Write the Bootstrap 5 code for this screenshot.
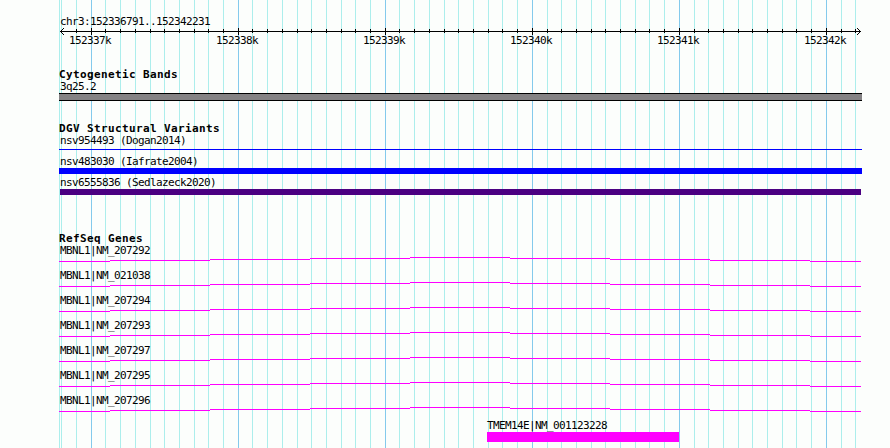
<!DOCTYPE html>
<html lang="en">
<head>
  <meta charset="UTF-8">
  <meta name="viewport" content="width=device-width, initial-scale=1">
  <title>chr3:152336791..152342231</title>
  <link href="https://cdn.jsdelivr.net/npm/bootstrap@5.3.0/dist/css/bootstrap.min.css" rel="stylesheet">
  <style>
    body { background: #fcfefc; color: #000; font-family: "DejaVu Sans Mono", monospace; }
    .browser-view { width: 890px; height: 448px; padding: 16px 0 0 59px; }
    .grid-lines { z-index: 0; }
    .tracks { z-index: 1; width: 803px; }
    svg { display: block; shape-rendering: crispEdges; overflow: visible; }
    .feature-label, .tick-label { font-size: 11px; line-height: 12px; height: 12px; letter-spacing: -0.622px; white-space: nowrap; }
    .feature-label { padding-left: 1px; }
    .track-title { font-size: 11px; font-weight: 700; line-height: 12px; height: 12px; margin: 0; letter-spacing: 0.378px; white-space: nowrap; }
    .tick-labels { height: 12px; margin: 0 0 22px 10px; }
    .tick-label { flex: 0 0 147px; }
    .band { height: 8px; margin-bottom: 22px; background: #848284; border: solid #000; border-width: 1px 0; }
    .variant-thin { height: 1px; margin: 2px 0 6px; background: #0000ff; }
    .variant-loss { height: 6px; margin-bottom: 3px; background: #0000ff; }
    .variant-complex { height: 6px; margin: 0 1px 38px 1px; background: #4b0082; }
    .gene { height: 25px; }
    .gene-short { margin-left: 428px; width: 192px; }
    .exon { height: 10px; background: #ff00ff; }
  </style>
</head>
<body>
  <main class="browser-view position-relative overflow-hidden">
    <svg class="grid-lines position-absolute top-0 start-0" id="gridLines" width="890" height="448" aria-hidden="true"></svg>

    <div class="tracks position-relative d-flex flex-column">
      <!-- Ruler -->
      <div class="feature-label">chr3:152336791..152342231</div>
      <svg id="ruler" width="803" height="7" viewBox="59 28 803 7" aria-hidden="true"></svg>
      <div class="tick-labels d-flex" id="tickLabels"></div>

      <!-- Cytobands -->
      <h2 class="track-title">Cytogenetic Bands</h2>
      <div class="feature-label">3q25.2</div>
      <div class="band"></div>

      <!-- Structural variants -->
      <h2 class="track-title">DGV Structural Variants</h2>
      <div class="feature-label">nsv954493 (Dogan2014)</div>
      <div class="variant-thin"></div>
      <div class="feature-label">nsv483030 (Iafrate2004)</div>
      <div class="variant-loss"></div>
      <div class="feature-label">nsv6555836 (Sedlazeck2020)</div>
      <div class="variant-complex"></div>

      <!-- Genes -->
      <h2 class="track-title">RefSeq Genes</h2>
      <div id="genes"></div>
      <div class="gene-short">
        <div class="feature-label ps-0">TMEM14E|NM_001123228</div>
        <div class="exon"></div>
      </div>
    </div>
  </main>

  <script>
    const firstTick = 91.2;
    const tickStep = 14.704;
    let grid = '<rect x="59" y="0" width="1" height="448" fill="#aceeec"/>';
    let ruler = '<rect x="60" y="31" width="801" height="1"/>';

    for (let i = -2; i <= 52; i++) {
      const x = Math.floor(firstTick + i * tickStep);
      const major = i % 10 === 0;
      grid += `<rect x="${x}" y="0" width="1" height="448" fill="${major ? "#84caec" : "#aceeec"}"/>`;
      if (i > -2) {
        ruler += `<rect x="${x}" y="${major ? 28 : 29}" width="1" height="${major ? 7 : 4}"/>`;
      }
    }
    // Arrow heads, one pixel per step
    for (let d = 1; d <= 3; d++) {
      ruler += `<rect x="${60 + d}" y="${31 - d}" width="1" height="1"/><rect x="${60 + d}" y="${31 + d}" width="1" height="1"/>`;
      ruler += `<rect x="${860 - d}" y="${31 - d}" width="1" height="1"/><rect x="${860 - d}" y="${31 + d}" width="1" height="1"/>`;
    }
    document.getElementById("gridLines").innerHTML = grid;
    document.getElementById("ruler").innerHTML = ruler;

    document.getElementById("tickLabels").innerHTML = [152337, 152338, 152339, 152340, 152341, 152342]
      .map(k => `<span class="tick-label">${k}k</span>`).join("");

    // Intron line climbs to the middle of the view and drops again
    const steps = [[0, 51, 4], [51, 100, 3], [151, 100, 2], [251, 100, 1], [351, 100, 0],
      [451, 100, 1], [551, 100, 2], [651, 100, 3], [751, 51, 4]];
    const intron = steps.map(([x, w, y]) => `<rect x="${x}" y="${y}" width="${w}" height="1" fill="#ff00ff"/>`).join("");
    document.getElementById("genes").innerHTML = ["207292", "021038", "207294", "207293", "207297", "207295", "207296"]
      .map(id => `
        <div class="gene">
          <div class="feature-label">MBNL1|NM_${id}</div>
          <svg width="803" height="5" aria-hidden="true">${intron}</svg>
        </div>`).join("");
  </script>
  <script src="https://cdn.jsdelivr.net/npm/bootstrap@5.3.0/dist/js/bootstrap.bundle.min.js"></script>
</body>
</html>
